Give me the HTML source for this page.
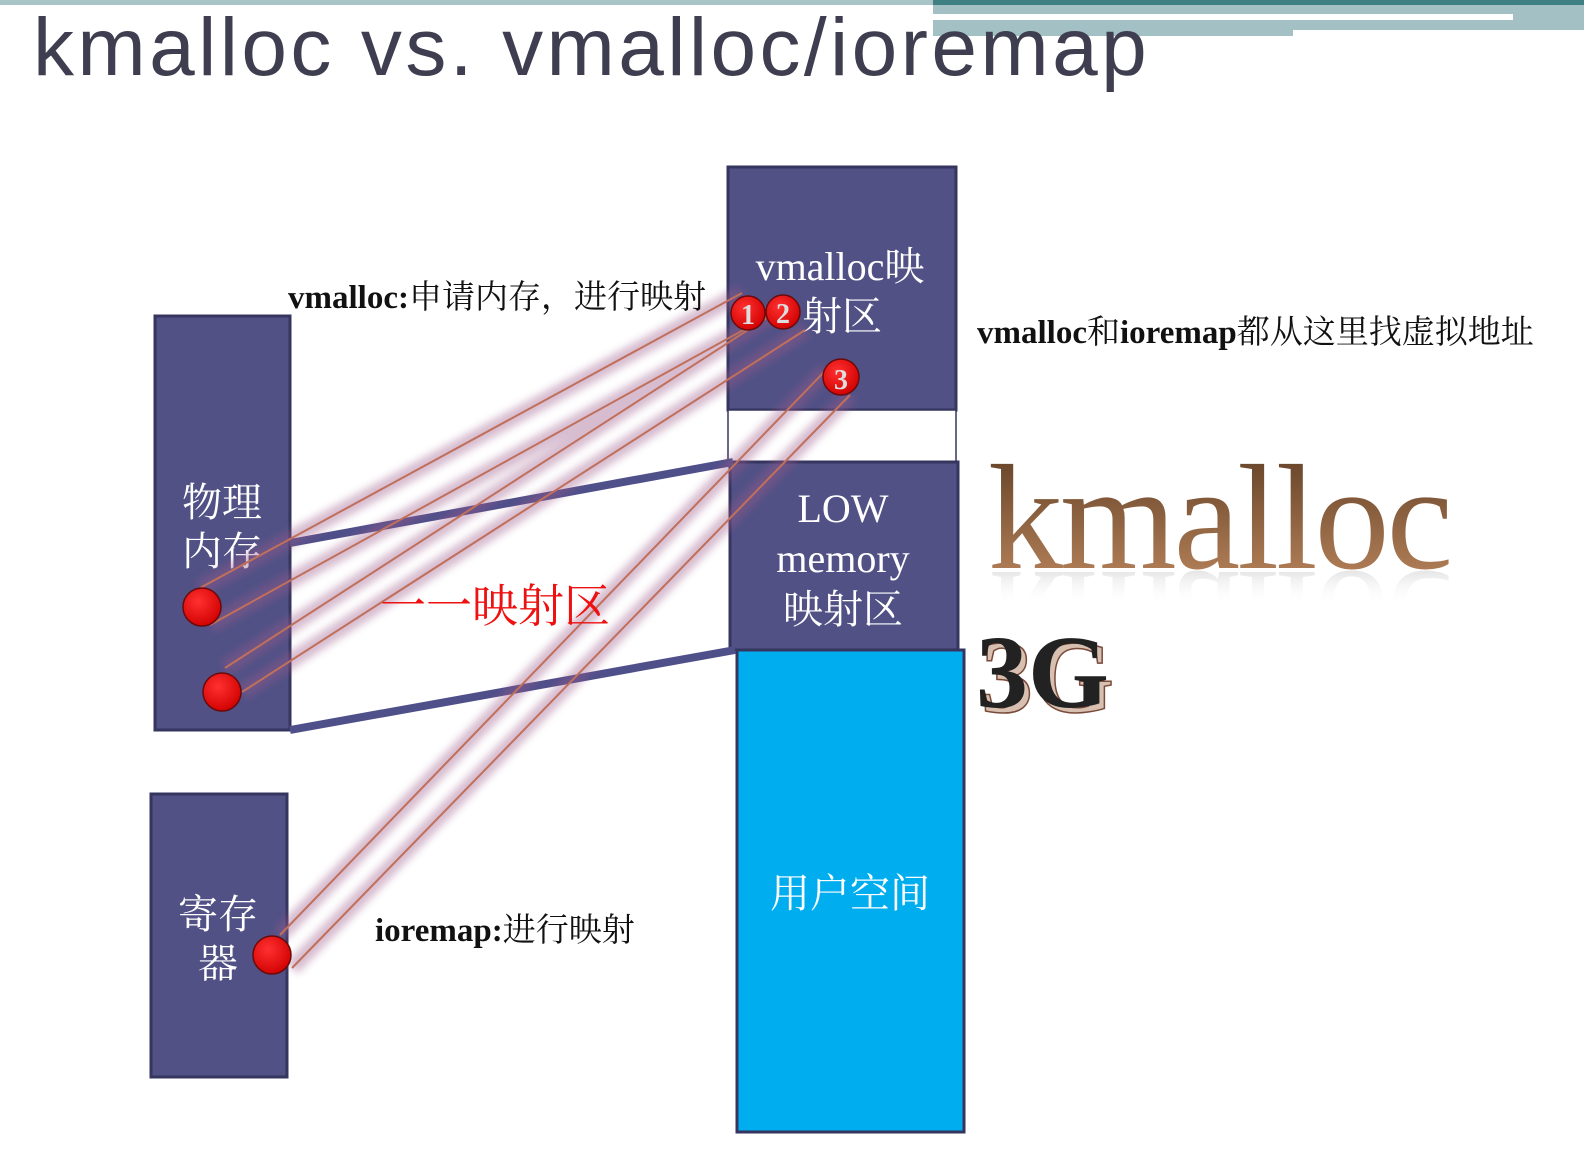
<!DOCTYPE html>
<html><head><meta charset="utf-8"><style>
html,body{margin:0;padding:0;background:#fff;}
body{width:1584px;height:1174px;overflow:hidden;position:relative;}
svg{position:absolute;left:0;top:0;}
</style></head><body>
<svg width="1584" height="1174" viewBox="0 0 1584 1174" xmlns="http://www.w3.org/2000/svg">
<defs>
<filter id="blur" x="-20%" y="-20%" width="140%" height="140%"><feGaussianBlur stdDeviation="4"/></filter>
<linearGradient id="km" x1="0" y1="0" x2="0" y2="1"><stop offset="0" stop-color="#5a3a22"/><stop offset="1" stop-color="#c08a60"/></linearGradient>
<linearGradient id="kmr" x1="0" y1="0" x2="0" y2="1"><stop offset="0" stop-color="#fff" stop-opacity="0"/><stop offset="0.6" stop-color="#fff" stop-opacity="0"/><stop offset="1" stop-color="#888" stop-opacity="0.8"/></linearGradient>
<radialGradient id="rc" cx="0.4" cy="0.35" r="0.7"><stop offset="0" stop-color="#ff3030"/><stop offset="1" stop-color="#d00000"/></radialGradient>
</defs>
<rect x="0" y="0" width="935" height="5" fill="#a8c4c7"/>
<rect x="933" y="0" width="651" height="5" fill="#3f8082"/>
<rect x="933" y="5" width="651" height="9" fill="#a3c1c4"/>
<rect x="933" y="14" width="580" height="6" fill="#fff"/>
<rect x="1513" y="14" width="71" height="16" fill="#a3c1c4"/>
<rect x="933" y="20" width="580" height="10" fill="#a3c1c4"/>
<rect x="933" y="30" width="360" height="6" fill="#a3c1c4"/>
<text x="33" y="75" font-family="Liberation Sans, DejaVu Sans, sans-serif" font-size="82" letter-spacing="3.4" fill="#3e3e50">kmalloc vs. vmalloc/ioremap</text>

<g stroke="#35355f" stroke-width="3">
<rect x="728" y="167" width="228" height="243" fill="#515186"/>
<rect x="728" y="410" width="228" height="52" fill="#fff" stroke-width="1.5"/>
<rect x="730" y="462" width="228" height="188" fill="#515186"/>
<rect x="737" y="650" width="227" height="482" fill="#00aeef"/>
<rect x="155" y="316" width="135" height="414" fill="#515186"/>
<rect x="151" y="794" width="136" height="283" fill="#515186"/>
</g>
<line x1="290" y1="543" x2="733" y2="462" stroke="#4f4f8a" stroke-width="8"/>
<line x1="290" y1="730" x2="735" y2="650" stroke="#4f4f8a" stroke-width="8"/>

<g font-family="Liberation Serif, Noto Serif CJK SC, serif" fill="#fff" font-size="40" text-anchor="middle">
<text x="840" y="280">vmalloc映</text>
<text x="842" y="330">射区</text>
<text x="843" y="522">LOW</text>
<text x="843" y="572">memory</text>
<text x="843" y="623">映射区</text>
<text x="850" y="907">用户空间</text>
<text x="222" y="516">物理</text>
<text x="222" y="565">内存</text>
<text x="218" y="928">寄存</text>
<text x="218" y="977">器</text>
</g>

<g stroke="#9c5a8a" stroke-width="16" opacity="0.4" filter="url(#blur)" fill="none">
<line x1="200" y1="588" x2="742" y2="293"/>
<line x1="210" y1="625" x2="765" y2="318"/>
<line x1="225" y1="668" x2="785" y2="306"/>
<line x1="242" y1="692" x2="805" y2="330"/>
<line x1="280" y1="935" x2="826" y2="370"/>
<line x1="292" y1="968" x2="850" y2="395"/>
</g>
<g stroke="#c0705a" stroke-width="2" fill="none">
<line x1="200" y1="588" x2="742" y2="293"/>
<line x1="210" y1="625" x2="765" y2="318"/>
<line x1="225" y1="668" x2="785" y2="306"/>
<line x1="242" y1="692" x2="805" y2="330"/>
<line x1="280" y1="935" x2="826" y2="370"/>
<line x1="292" y1="968" x2="850" y2="395"/>
</g>
<g fill="url(#rc)" stroke="#6a0a0a" stroke-width="1.5">
<circle cx="202" cy="607" r="19"/>
<circle cx="222" cy="692" r="19"/>
<circle cx="272" cy="955" r="19"/>
<circle cx="748" cy="313" r="17"/>
<circle cx="783" cy="312" r="17"/>
<circle cx="841" cy="377" r="18"/>
</g>
<g font-family="Liberation Serif, serif" font-weight="bold" font-size="28" fill="#ddd" text-anchor="middle">
<text x="748" y="324">1</text><text x="783" y="323">2</text><text x="841" y="389">3</text>
</g>

<g font-family="Liberation Serif, Noto Serif CJK SC, serif" font-size="33" fill="#111" font-weight="bold">
<text x="288" y="308">vmalloc:<tspan font-weight="normal">申请内存，进行映射</tspan></text>
<text x="977" y="343">vmalloc<tspan font-weight="normal">和</tspan>ioremap<tspan font-weight="normal">都从这里找虚拟地址</tspan></text>
<text x="375" y="941">ioremap:<tspan font-weight="normal">进行映射</tspan></text>
</g>
<text x="380" y="622" font-family="Liberation Serif, Noto Serif CJK SC, serif" font-size="46" fill="#ee1111">一一映射区</text>

<g transform="translate(0,1140) scale(1,-1)">
<text x="988" y="568" font-family="Liberation Serif, serif" font-size="150" fill="url(#kmr)" letter-spacing="-3">kmalloc</text>
</g>
<rect x="980" y="608" width="470" height="80" fill="#fff"/>
<text x="988" y="568" font-family="Liberation Serif, serif" font-size="150" fill="url(#km)" letter-spacing="-3">kmalloc</text>
<text x="981" y="712" font-family="Liberation Serif, serif" font-weight="bold" font-size="104" fill="#d8c0b0" stroke="#7a4a3a" stroke-width="1.5">3G</text>
<text x="976" y="707" font-family="Liberation Serif, serif" font-weight="bold" font-size="104" fill="#222">3G</text>
</svg>
</body></html>
